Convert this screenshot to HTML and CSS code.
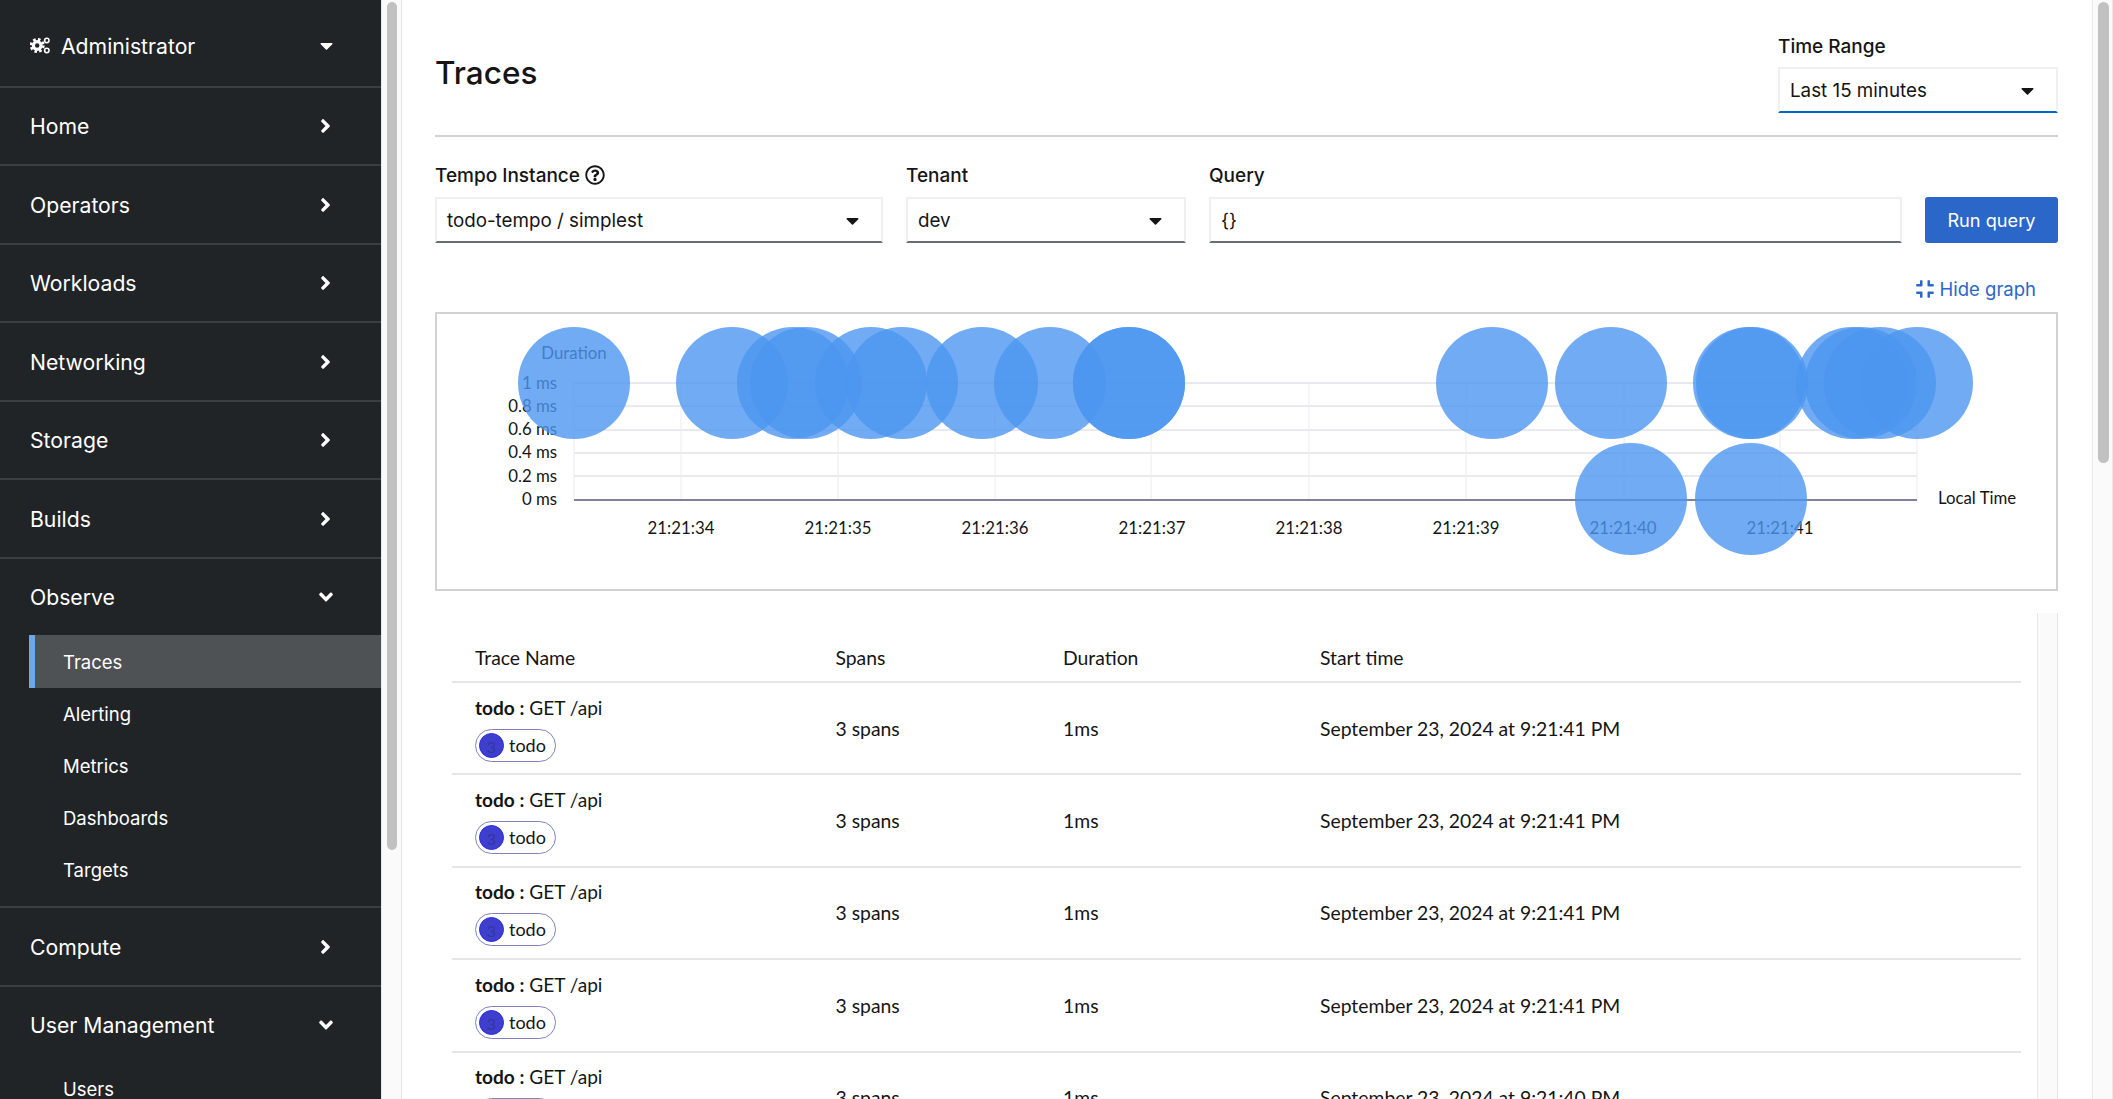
FILE: index.html
```html
<!DOCTYPE html>
<html lang="en">
<head>
    <meta charset="UTF-8">
    <meta name="viewport" content="width=device-width, initial-scale=1.0">
    <title>Traces</title>
    <link rel="stylesheet" href="styles.css">
</head>
<body>
<div class="app">
    <nav class="sidebar">
        <div class="nav-item nav-perspective">
            <span class="nav-label">
                <svg class="cogs" viewBox="0 0 20 17"><circle class="cog-teeth" cx="7.2" cy="8.5" r="6.2"/><circle class="cog-body" cx="7.2" cy="8.5" r="5.4"/><circle class="cog-hole" cx="7.2" cy="8.5" r="2.2"/><circle class="cog-small" cx="16.8" cy="3.5" r="2.2"/><circle class="cog-small" cx="16.8" cy="13.5" r="2.2"/></svg>
                Administrator
            </span>
            <svg class="caret" viewBox="0 0 320 512"><path d="M31.3 192h257.3c17.8 0 26.7 21.5 14.1 34.1L174.1 354.8c-7.8 7.8-20.5 7.8-28.3 0L17.2 226.1C4.6 213.5 13.5 192 31.3 192z"/></svg>
        </div>
        <div class="nav-item"><span>Home</span><svg class="angle-right" viewBox="0 0 256 512"><path d="M224.3 273l-136 136c-9.4 9.4-24.6 9.4-33.9 0l-22.6-22.6c-9.4-9.4-9.4-24.6 0-33.9l96.4-96.4-96.4-96.4c-9.4-9.4-9.4-24.6 0-33.9L54.3 103c9.4-9.4 24.6-9.4 33.9 0l136 136c9.5 9.4 9.5 24.6.1 34z"/></svg></div>
        <div class="nav-item"><span>Operators</span><svg class="angle-right" viewBox="0 0 256 512"><path d="M224.3 273l-136 136c-9.4 9.4-24.6 9.4-33.9 0l-22.6-22.6c-9.4-9.4-9.4-24.6 0-33.9l96.4-96.4-96.4-96.4c-9.4-9.4-9.4-24.6 0-33.9L54.3 103c9.4-9.4 24.6-9.4 33.9 0l136 136c9.5 9.4 9.5 24.6.1 34z"/></svg></div>
        <div class="nav-item"><span>Workloads</span><svg class="angle-right" viewBox="0 0 256 512"><path d="M224.3 273l-136 136c-9.4 9.4-24.6 9.4-33.9 0l-22.6-22.6c-9.4-9.4-9.4-24.6 0-33.9l96.4-96.4-96.4-96.4c-9.4-9.4-9.4-24.6 0-33.9L54.3 103c9.4-9.4 24.6-9.4 33.9 0l136 136c9.5 9.4 9.5 24.6.1 34z"/></svg></div>
        <div class="nav-item"><span>Networking</span><svg class="angle-right" viewBox="0 0 256 512"><path d="M224.3 273l-136 136c-9.4 9.4-24.6 9.4-33.9 0l-22.6-22.6c-9.4-9.4-9.4-24.6 0-33.9l96.4-96.4-96.4-96.4c-9.4-9.4-9.4-24.6 0-33.9L54.3 103c9.4-9.4 24.6-9.4 33.9 0l136 136c9.5 9.4 9.5 24.6.1 34z"/></svg></div>
        <div class="nav-item"><span>Storage</span><svg class="angle-right" viewBox="0 0 256 512"><path d="M224.3 273l-136 136c-9.4 9.4-24.6 9.4-33.9 0l-22.6-22.6c-9.4-9.4-9.4-24.6 0-33.9l96.4-96.4-96.4-96.4c-9.4-9.4-9.4-24.6 0-33.9L54.3 103c9.4-9.4 24.6-9.4 33.9 0l136 136c9.5 9.4 9.5 24.6.1 34z"/></svg></div>
        <div class="nav-item"><span>Builds</span><svg class="angle-right" viewBox="0 0 256 512"><path d="M224.3 273l-136 136c-9.4 9.4-24.6 9.4-33.9 0l-22.6-22.6c-9.4-9.4-9.4-24.6 0-33.9l96.4-96.4-96.4-96.4c-9.4-9.4-9.4-24.6 0-33.9L54.3 103c9.4-9.4 24.6-9.4 33.9 0l136 136c9.5 9.4 9.5 24.6.1 34z"/></svg></div>
        <div class="nav-group">
            <div class="nav-item nav-open"><span>Observe</span><svg class="angle-down" viewBox="0 0 320 512"><path d="M143 352.3L7 216.3c-9.4-9.4-9.4-24.6 0-33.9l22.6-22.6c9.4-9.4 24.6-9.4 33.9 0l96.4 96.4 96.4-96.4c9.4-9.4 24.6-9.4 33.9 0l22.6 22.6c9.4 9.4 9.4 24.6 0 33.9l-136 136c-9.2 9.4-24.4 9.4-33.8 0z"/></svg></div>
            <a class="sub-item active">Traces</a>
            <a class="sub-item">Alerting</a>
            <a class="sub-item">Metrics</a>
            <a class="sub-item">Dashboards</a>
            <a class="sub-item">Targets</a>
        </div>
        <div class="nav-item"><span>Compute</span><svg class="angle-right" viewBox="0 0 256 512"><path d="M224.3 273l-136 136c-9.4 9.4-24.6 9.4-33.9 0l-22.6-22.6c-9.4-9.4-9.4-24.6 0-33.9l96.4-96.4-96.4-96.4c-9.4-9.4-9.4-24.6 0-33.9L54.3 103c9.4-9.4 24.6-9.4 33.9 0l136 136c9.5 9.4 9.5 24.6.1 34z"/></svg></div>
        <div class="nav-group nav-group-last">
            <div class="nav-item nav-open"><span>User Management</span><svg class="angle-down" viewBox="0 0 320 512"><path d="M143 352.3L7 216.3c-9.4-9.4-9.4-24.6 0-33.9l22.6-22.6c9.4-9.4 24.6-9.4 33.9 0l96.4 96.4 96.4-96.4c9.4-9.4 24.6-9.4 33.9 0l22.6 22.6c9.4 9.4 9.4 24.6 0 33.9l-136 136c-9.2 9.4-24.4 9.4-33.8 0z"/></svg></div>
            <a class="sub-item">Users</a>
        </div>
    </nav>
    <div class="rail rail-nav"><div class="thumb thumb-nav"></div></div>

    <main class="main">
        <header class="page-head">
            <h1>Traces</h1>
            <div class="time-range">
                <label class="field-label">Time Range</label>
                <div class="select select-active">
                    <span>Last 15 minutes</span>
                    <svg class="select-caret" viewBox="0 0 320 512"><path d="M31.3 192h257.3c17.8 0 26.7 21.5 14.1 34.1L174.1 354.8c-7.8 7.8-20.5 7.8-28.3 0L17.2 226.1C4.6 213.5 13.5 192 31.3 192z"/></svg>
                </div>
            </div>
        </header>

        <section class="query-row">
            <div class="field field-instance">
                <label class="field-label">Tempo Instance
                    <svg class="help" viewBox="0 0 512 512"><path d="M256 8C119.043 8 8 119.083 8 256c0 136.997 111.043 248 248 248s248-111.003 248-248C504 119.083 392.957 8 256 8zm0 448c-110.532 0-200-89.431-200-200 0-110.495 89.472-200 200-200 110.491 0 200 89.471 200 200 0 110.569-89.431 200-200 200zm107.244-255.2c0 67.052-72.421 68.084-72.421 92.863V300c0 6.627-5.373 12-12 12h-45.647c-6.627 0-12-5.373-12-12v-8.659c0-35.745 27.1-50.034 47.579-61.516 17.561-9.845 28.324-16.541 28.324-29.579 0-17.246-21.999-28.693-39.784-28.693-23.189 0-33.894 10.977-48.942 29.969-4.057 5.12-11.46 6.071-16.666 2.124l-27.824-21.098c-5.107-3.872-6.251-11.066-2.644-16.363C184.846 131.491 214.94 112 261.794 112c49.071 0 101.45 38.304 101.45 88.8zM298 368c0 23.159-18.841 42-42 42s-42-18.841-42-42 18.841-42 42-42 42 18.841 42 42z"/></svg>
                </label>
                <div class="select">
                    <span>todo-tempo / simplest</span>
                    <svg class="select-caret" viewBox="0 0 320 512"><path d="M31.3 192h257.3c17.8 0 26.7 21.5 14.1 34.1L174.1 354.8c-7.8 7.8-20.5 7.8-28.3 0L17.2 226.1C4.6 213.5 13.5 192 31.3 192z"/></svg>
                </div>
            </div>
            <div class="field field-tenant">
                <label class="field-label">Tenant</label>
                <div class="select">
                    <span>dev</span>
                    <svg class="select-caret" viewBox="0 0 320 512"><path d="M31.3 192h257.3c17.8 0 26.7 21.5 14.1 34.1L174.1 354.8c-7.8 7.8-20.5 7.8-28.3 0L17.2 226.1C4.6 213.5 13.5 192 31.3 192z"/></svg>
                </div>
            </div>
            <div class="field field-query">
                <label class="field-label">Query</label>
                <div class="select"><span>{}</span></div>
            </div>
            <button class="run-query">Run query</button>
        </section>

        <div class="graph-toggle">
            <svg class="compress" viewBox="0 0 448 512"><path d="M436 192H312c-13.3 0-24-10.7-24-24V44c0-6.6 5.4-12 12-12h40c6.6 0 12 5.4 12 12v84h84c6.6 0 12 5.4 12 12v40c0 6.6-5.4 12-12 12zm-276-24V44c0-6.6-5.4-12-12-12h-40c-6.6 0-12 5.4-12 12v84H12c-6.6 0-12 5.4-12 12v40c0 6.6 5.4 12 12 12h124c13.3 0 24-10.7 24-24zm0 300V344c0-13.3-10.7-24-24-24H12c-6.6 0-12 5.4-12 12v40c0 6.6 5.4 12 12 12h84v84c0 6.6 5.4 12 12 12h40c6.6 0 12-5.4 12-12zm192 0v-84h84c6.6 0 12-5.4 12-12v-40c0-6.6-5.4-12-12-12H312c-13.3 0-24 10.7-24 24v124c0 6.6 5.4 12 12 12h40c6.6 0 12-5.4 12-12z"/></svg>
            <span>Hide graph</span>
        </div>

        <div class="chart-box">
            <svg class="chart" viewBox="437 313 1619 275">
                <g class="grid-h">
                    <line x1="574" x2="1917" y1="382" y2="382"/>
                    <line x1="574" x2="1917" y1="405" y2="405"/>
                    <line x1="574" x2="1917" y1="429" y2="429"/>
                    <line x1="574" x2="1917" y1="452" y2="452"/>
                    <line x1="574" x2="1917" y1="475" y2="475"/>
                </g>
                <g class="grid-v">
                    <line x1="574" x2="574" y1="382" y2="499"/>
                    <line x1="681" x2="681" y1="382" y2="499"/>
                    <line x1="838" x2="838" y1="382" y2="499"/>
                    <line x1="995" x2="995" y1="382" y2="499"/>
                    <line x1="1151" x2="1151" y1="382" y2="499"/>
                    <line x1="1309" x2="1309" y1="382" y2="499"/>
                    <line x1="1466" x2="1466" y1="382" y2="499"/>
                    <line x1="1624" x2="1624" y1="382" y2="499"/>
                    <line x1="1780" x2="1780" y1="382" y2="499"/>
                    <line x1="1917" x2="1917" y1="382" y2="499"/>
                </g>
                <line class="axis" x1="574" x2="1917" y1="499" y2="499"/>
                <g class="tick-y">
                    <text x="557" y="388">1 ms</text>
                    <text x="557" y="411">0.8 ms</text>
                    <text x="557" y="434">0.6 ms</text>
                    <text x="557" y="457">0.4 ms</text>
                    <text x="557" y="481">0.2 ms</text>
                    <text x="557" y="504">0 ms</text>
                </g>
                <g class="tick-x">
                    <text x="681" y="533">21:21:34</text>
                    <text x="838" y="533">21:21:35</text>
                    <text x="995" y="533">21:21:36</text>
                    <text x="1152" y="533">21:21:37</text>
                    <text x="1309" y="533">21:21:38</text>
                    <text x="1466" y="533">21:21:39</text>
                    <text x="1623" y="533">21:21:40</text>
                    <text x="1780" y="533">21:21:41</text>
                </g>
                <text class="axis-title" x="574" y="358">Duration</text>
                <text class="axis-side" x="1938" y="503">Local Time</text>
                <g class="points">
                    <circle cx="574" cy="382" r="56"/>
                    <circle cx="732" cy="382" r="56"/>
                    <circle cx="793" cy="382" r="56"/>
                    <circle cx="806" cy="382" r="56"/>
                    <circle cx="871" cy="382" r="56"/>
                    <circle cx="902" cy="382" r="56"/>
                    <circle cx="982" cy="382" r="56"/>
                    <circle cx="1050" cy="382" r="56"/>
                    <circle cx="1129" cy="382" r="56"/>
                    <circle cx="1129" cy="382" r="56"/>
                    <circle cx="1492" cy="382" r="56"/>
                    <circle cx="1611" cy="382" r="56"/>
                    <circle cx="1749" cy="382" r="56"/>
                    <circle cx="1752" cy="382" r="56"/>
                    <circle cx="1852" cy="382" r="56"/>
                    <circle cx="1861" cy="382" r="56"/>
                    <circle cx="1880" cy="382" r="56"/>
                    <circle cx="1917" cy="382" r="56"/>
                    <circle cx="1631" cy="498" r="56"/>
                    <circle cx="1751" cy="498" r="56"/>
                </g>
            </svg>
        </div>

        <section class="results">
            <table class="traces">
                <thead>
                    <tr>
                        <th class="col-name">Trace Name</th>
                        <th class="col-spans">Spans</th>
                        <th class="col-duration">Duration</th>
                        <th>Start time</th>
                    </tr>
                </thead>
                <tbody>
                    <tr>
                        <td><div class="trace-title"><b>todo :</b> GET /api</div><span class="service"><span class="service-dot">3</span>todo</span></td>
                        <td>3 spans</td>
                        <td>1ms</td>
                        <td>September 23, 2024 at 9:21:41 PM</td>
                    </tr>
                    <tr>
                        <td><div class="trace-title"><b>todo :</b> GET /api</div><span class="service"><span class="service-dot">3</span>todo</span></td>
                        <td>3 spans</td>
                        <td>1ms</td>
                        <td>September 23, 2024 at 9:21:41 PM</td>
                    </tr>
                    <tr>
                        <td><div class="trace-title"><b>todo :</b> GET /api</div><span class="service"><span class="service-dot">3</span>todo</span></td>
                        <td>3 spans</td>
                        <td>1ms</td>
                        <td>September 23, 2024 at 9:21:41 PM</td>
                    </tr>
                    <tr>
                        <td><div class="trace-title"><b>todo :</b> GET /api</div><span class="service"><span class="service-dot">3</span>todo</span></td>
                        <td>3 spans</td>
                        <td>1ms</td>
                        <td>September 23, 2024 at 9:21:41 PM</td>
                    </tr>
                    <tr>
                        <td><div class="trace-title"><b>todo :</b> GET /api</div><span class="service"><span class="service-dot">3</span>todo</span></td>
                        <td>3 spans</td>
                        <td>1ms</td>
                        <td>September 23, 2024 at 9:21:40 PM</td>
                    </tr>
                </tbody>
            </table>
            <div class="rail rail-table"></div>
        </section>
    </main>

    <div class="rail rail-page"><div class="thumb thumb-page"></div></div>
</div>
</body>
</html>
```

FILE: styles.css
```css
* {
    box-sizing: border-box;
}
body {
    margin: 0;
    font-family: Inter, "Noto Sans", sans-serif;
    color: #151515;
    background: #fff;
}
.app {
    display: flex;
    height: 100vh;
    overflow: hidden;
}

/* sidebar */
.sidebar {
    width: 381px;
    flex: none;
    overflow: hidden;
    background: #212427;
    color: #fff;
    font-size: 21.2px;
}
.nav-item {
    height: 78.5px;
    padding: 1px 48px 0 30px;
    display: flex;
    align-items: center;
    justify-content: space-between;
    border-bottom: 2px solid #3c3f42;
}
.nav-perspective {
    height: 87.5px;
    padding-top: 6px;
}
.nav-label {
    display: flex;
    align-items: center;
    gap: 11px;
}
.nav-open {
    border-bottom: none;
    height: 76.5px;
}
.nav-group {
    border-bottom: 2px solid #3c3f42;
    padding-bottom: 10px;
}
.nav-group-last {
    border-bottom: none;
}
.sub-item {
    display: flex;
    align-items: center;
    height: 52px;
    margin-left: 29px;
    padding-left: 34px;
    font-size: 18.5px;
}
.sub-item.active {
    height: 53px;
    background: #4f5255;
    border-left: 6px solid #6ea8ea;
    padding-left: 28px;
}
.cogs {
    width: 20px;
    height: 17px;
    fill: #fff;
}
.cog-teeth {
    fill: none;
    stroke: #fff;
    stroke-width: 2.6;
    stroke-dasharray: 2.6 2.27;
}
.cog-hole {
    fill: #212427;
}
.cog-small {
    fill: none;
    stroke: #fff;
    stroke-width: 1.6;
}
.caret {
    width: 13px;
    height: 21px;
    fill: #fff;
}
.angle-right {
    width: 11px;
    height: 22px;
    fill: #fff;
    margin-right: 2px;
}
.angle-down {
    width: 14px;
    height: 22px;
    fill: #fff;
}

/* fake scrollbars */
.rail {
    flex: none;
    background: #fafafa;
    border-left: 1px solid #e8e8e8;
    border-right: 1px solid #e8e8e8;
}
.rail-nav {
    width: 21px;
    padding: 2px 4px 0 5px;
}
.rail-page {
    width: 21px;
    padding: 2px 3px 0 5px;
}
.rail-table {
    width: 21px;
}
.thumb {
    background: #c1c1c1;
    border-radius: 6px;
}
.thumb-nav {
    height: 848px;
}
.thumb-page {
    height: 461px;
}

/* main column */
.main {
    flex: 1;
    min-width: 0;
    padding: 0 34px 0 33px;
    display: flex;
    flex-direction: column;
}
.page-head {
    height: 137px;
    flex: none;
    display: flex;
    justify-content: space-between;
    border-bottom: 2px solid #d2d2d2;
}
h1 {
    margin: 52px 0 0;
    font-size: 31.5px;
    line-height: 42px;
    font-weight: 500;
}
.time-range {
    width: 280px;
    padding-top: 32px;
}
.field-label {
    display: flex;
    align-items: center;
    gap: 5px;
    height: 28px;
    font-size: 19px;
    font-weight: 500;
    margin-bottom: 8px;
}
.time-range .field-label {
    margin-bottom: 7px;
}
.select {
    height: 46px;
    padding: 0 10px;
    display: flex;
    align-items: center;
    justify-content: space-between;
    border: 2px solid #f0f0f0;
    border-bottom-color: #6a6e73;
    font-size: 18.8px;
}
.select-active {
    border-bottom-color: #0066cc;
}
.select-caret {
    width: 13px;
    height: 21px;
    fill: #151515;
    margin-right: 12px;
}
.help {
    width: 20px;
    height: 20px;
    fill: #151515;
}
.query-row {
    flex: none;
    display: flex;
    align-items: flex-end;
    gap: 23px;
    padding-top: 24px;
}
.field-instance {
    width: 448px;
}
.field-tenant {
    width: 280px;
}
.field-query {
    width: 693px;
}
.run-query {
    width: 133px;
    height: 46px;
    border: none;
    border-radius: 3px;
    background: #2b66c9;
    color: #fff;
    font: inherit;
    font-size: 18.2px;
}
.graph-toggle {
    flex: none;
    display: flex;
    justify-content: flex-end;
    align-items: center;
    gap: 5px;
    height: 69px;
    padding: 23px 22px 0 0;
    color: #2b66c9;
    font-size: 18.5px;
}
.compress {
    width: 18px;
    height: 20px;
    fill: #2b66c9;
}

/* chart */
.chart-box {
    flex: none;
    height: 279px;
    border: 2px solid #d2d2d2;
}
.chart {
    display: block;
    width: 100%;
    height: 100%;
    font-family: Lato, sans-serif;
    font-size: 16.8px;
    fill: #151515;
}
.grid-h line {
    stroke: #e9e9f0;
    stroke-width: 2;
}
.grid-v line {
    stroke: #ececf2;
    stroke-width: 1;
}
.axis {
    stroke: #7f8299;
    stroke-width: 2;
}
.tick-y text {
    text-anchor: end;
}
.tick-x text,
.axis-title {
    text-anchor: middle;
}
.points circle {
    fill: rgb(76, 150, 240);
    opacity: 0.8;
}

/* results table */
.results {
    flex: 1;
    min-height: 0;
    margin-top: 22px;
    padding-left: 17px;
    display: flex;
    gap: 16px;
    overflow: hidden;
}
.traces {
    flex: 1;
    align-self: flex-start;
    border-collapse: collapse;
    table-layout: fixed;
    font-family: Lato, sans-serif;
    font-size: 19.35px;
    line-height: 25px;
}
.traces th {
    height: 69px;
    padding: 20px 0 0;
    font-weight: 400;
    text-align: left;
    border-bottom: 2px solid #e6e6e6;
}
.traces th.col-name {
    width: 383.5px;
    padding-left: 23px;
}
.traces th.col-spans {
    width: 227.5px;
}
.traces th.col-duration {
    width: 257px;
}
.traces td {
    height: 92.4px;
    padding: 0;
    border-bottom: 2px solid #e6e6e6;
}
.traces td:first-child {
    padding-left: 23px;
}
.trace-title {
    margin-bottom: 9px;
    font-size: 19.1px;
}
.trace-title b {
    font-weight: 700;
}
.service {
    display: inline-flex;
    align-items: center;
    gap: 5px;
    width: 81px;
    height: 33px;
    padding-left: 3px;
    border: 1.5px solid #7e84b8;
    border-radius: 17px;
    font-size: 18px;
}
.service-dot {
    width: 25px;
    height: 25px;
    border: 1px solid #2a2ae0;
    border-radius: 50%;
    background: #3f3fcf;
    color: #3535a0;
    text-align: center;
    font-size: 16px;
}
```
